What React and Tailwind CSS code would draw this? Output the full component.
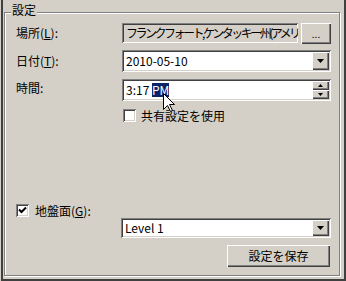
import React from "react";

const sunken =
  "shadow-[inset_1px_1px_0_#808080,inset_-1px_-1px_0_#ffffff,inset_2px_2px_0_#404040,inset_-2px_-2px_0_#d4d0c8]";
const raised =
  "shadow-[inset_1px_1px_0_#ffffff,inset_-1px_-1px_0_#404040,inset_-2px_-2px_0_#808080]";

function DownTri({ w = 7, h = 4 }) {
  return (
    <svg width={w} height={h} viewBox={`0 0 ${w} ${h}`}>
      <polygon points={`0,0 ${w},0 ${w / 2},${h}`} fill="#000" />
    </svg>
  );
}
function UpTri({ w = 5, h = 3 }) {
  return (
    <svg width={w} height={h} viewBox={`0 0 ${w} ${h}`}>
      <polygon points={`0,${h} ${w},${h} ${w / 2},0`} fill="#000" />
    </svg>
  );
}

function Combo({ children, className = "" }) {
  return (
    <div className={`flex items-stretch bg-white p-[2px] ${sunken} ${className}`}>
      <div className="flex flex-1 items-center overflow-hidden whitespace-nowrap pl-[2px]">
        {children}
      </div>
      <div className={`flex w-[17px] items-center justify-center bg-[#d4d0c8] ${raised}`}>
        <DownTri />
      </div>
    </div>
  );
}

function Check({ checked }) {
  return (
    <div className={`relative h-[13px] w-[13px] bg-white ${sunken}`}>
      {checked && (
        <svg className="absolute left-0 top-0" width="13" height="13" viewBox="0 0 13 13">
          <polyline points="3,5.5 5.5,8 10,3.5" fill="none" stroke="#000" strokeWidth="2" />
        </svg>
      )}
    </div>
  );
}

export default function App() {
  return (
    <div className="relative h-[281px] w-[346px] overflow-hidden bg-[#d4d0c8] pl-px font-['Noto_Sans_CJK_JP',sans-serif] text-[12px] leading-none text-black">
      <div className="h-full border-b-2 border-l-2 border-r-2 border-[#404040] pb-[3px] pl-px pr-[4px] pt-[12px]">
        <div className="relative h-full border border-[#808080] pl-[11px] pr-[8px] pt-[9px] shadow-[inset_1px_1px_0_#ffffff,1px_1px_0_#ffffff]">
          <div className="absolute left-[6px] top-[-9px] bg-[#d4d0c8] px-px">設定</div>

          {/* 場所 */}
          <div className="flex h-[22px] items-center">
            <div className="w-[106px]">
              場所(<span className="underline">L</span>):
            </div>
            <div
              className={`flex h-[20px] w-[176px] items-center overflow-hidden whitespace-nowrap bg-[#d4d0c8] pl-[4px] tracking-[-2.5px] ${sunken}`}
            >
              フランクフォート,&nbsp;ケンタッキー州(アメリカ
            </div>
            <div
              className={`ml-[3px] flex h-[21px] w-[30px] items-end justify-center pb-[5px] text-[10px] ${raised}`}
            >
              ...
            </div>
          </div>

          {/* 日付 */}
          <div className="mt-[6px] flex h-[22px] items-center">
            <div className="w-[106px]">
              日付(<span className="underline">T</span>):
            </div>
            <Combo className="h-[22px] w-[209px]">2010-05-10</Combo>
          </div>

          {/* 時間 */}
          <div className="mt-[7px] flex h-[22px] items-center">
            <div className="w-[106px] pb-[4px]">時間:</div>
            <div className={`flex h-[22px] w-[209px] items-stretch bg-white p-[2px] ${sunken}`}>
              <div className="flex flex-1 items-center whitespace-nowrap pl-[2px]">
                3:17&nbsp;
                <span className="bg-[#0a246a] py-px text-white">PM</span>
              </div>
              <div className="flex w-[17px] flex-col">
                <div className={`flex h-[9px] items-center justify-center bg-[#d4d0c8] ${raised}`}>
                  <UpTri />
                </div>
                <div className={`flex h-[9px] items-center justify-center bg-[#d4d0c8] ${raised}`}>
                  <DownTri w={5} h={3} />
                </div>
              </div>
            </div>
          </div>

          {/* 共有設定を使用 */}
          <div className="mt-[8px] flex h-[13px] items-center pl-[107px]">
            <Check />
            <span className="ml-[5px]">共有設定を使用</span>
          </div>

          {/* 地盤面 */}
          <div className="mt-[82px] flex h-[13px] items-center">
            <Check checked />
            <span className="ml-[6px]">
              地盤面(<span className="underline">G</span>):
            </span>
          </div>

          <div className="mt-px flex pl-[105px]">
            <Combo className="h-[20px] w-[210px]">Level 1</Combo>
          </div>

          <div className="mt-[7px] flex justify-end pr-px">
            <div className={`flex h-[22px] w-[103px] items-center justify-center ${raised}`}>
              設定を保存
            </div>
          </div>
        </div>
      </div>

      {/* mouse cursor */}
      <svg className="absolute left-[163px] top-[93px]" width="13" height="20" viewBox="0 0 13 20">
        <path
          d="M0.5 0.5 L0.5 16.5 L4.5 12.5 L7.5 18.5 L9.5 17.5 L6.5 11.5 L11.5 11.5 Z"
          fill="#fff"
          stroke="#000"
          strokeWidth="1"
        />
      </svg>
    </div>
  );
}
